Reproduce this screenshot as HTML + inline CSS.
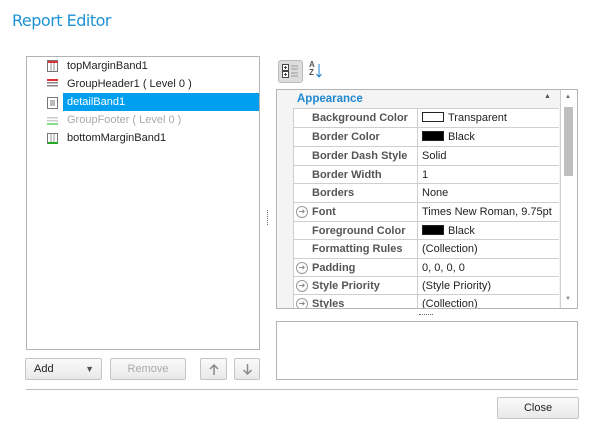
<!DOCTYPE html>
<html><head><style>
*{box-sizing:border-box;margin:0;padding:0}
body{width:603px;height:442px;background:#fff;font-family:"Liberation Sans","DejaVu Sans",sans-serif;font-size:11px;color:#222;position:relative;overflow:hidden}
.a{position:absolute;white-space:nowrap}
.title{left:12px;top:11px;font-size:16px;color:#1e92d6;font-family:"DejaVu Sans",sans-serif;letter-spacing:-0.5px}
.list{left:26px;top:56px;width:234px;height:294px;border:1px solid #b4b4b4}
.it{position:absolute;left:40px;height:18px;line-height:18px;font-size:11px;white-space:nowrap}
.sel{left:36px;width:196px;background:#009ff0;color:#fff;padding-left:4px}
.btn{border:1px solid #c4c4c4;border-radius:2px;background:linear-gradient(#fafafa,#e9e9e9);text-align:center;line-height:20px;font-size:11px}
.grid{left:276px;top:89px;width:302px;height:220px;border:1px solid #b4b4b4;background:#f4f4f4;overflow:hidden}
.row{position:absolute;left:16px;width:266px;height:19px;border-bottom:1px solid #cfcfcf;background:#fff;white-space:nowrap}
.row .n{position:absolute;left:0;top:0;bottom:0;width:125px;border-left:1px solid #cfcfcf;border-right:1px solid #cfcfcf;font-weight:bold;color:#555;padding-left:18px;line-height:18px;font-size:11px;overflow:hidden}
.row .v{position:absolute;left:129px;top:0;line-height:18px;font-size:11px;color:#222}
.sw{display:inline-block;width:22px;height:10px;border:1px solid #222;vertical-align:-1px;margin-right:4px}
.arr{position:absolute;left:2px;top:3px;width:12px;height:12px;border:1px solid #999;border-radius:50%;font-size:8px;line-height:10px;text-align:center;color:#888;font-weight:normal}
</style></head><body>
<div class="a title">Report Editor</div>

<div class="a list">
 <svg class="a" style="left:20px;top:3px" width="12" height="84" viewBox="0 0 12 84">
  <rect x="0.5" y="0.5" width="10" height="11" fill="#fff" stroke="#777"/><rect x="1" y="1" width="10" height="2" fill="#d33"/><line x1="4" y1="3" x2="4" y2="11" stroke="#999"/><line x1="7" y1="3" x2="7" y2="11" stroke="#999"/>
  <rect x="0" y="19" width="11" height="2" fill="#d33"/><rect x="0" y="22" width="11" height="1.5" fill="#888"/><rect x="0" y="25" width="11" height="1.5" fill="#888"/>
  <rect x="0.5" y="37.5" width="10" height="11" fill="#fff" stroke="#777"/><line x1="3" y1="41" x2="8" y2="41" stroke="#777"/><line x1="3" y1="43" x2="8" y2="43" stroke="#777"/><line x1="3" y1="45" x2="8" y2="45" stroke="#777"/>
  <rect x="0" y="57" width="11" height="1.5" fill="#ccc"/><rect x="0" y="60" width="11" height="1.5" fill="#ccc"/><rect x="0" y="63" width="11" height="2" fill="#8d8"/>
  <rect x="0.5" y="73.5" width="10" height="11" fill="#fff" stroke="#777"/><line x1="4" y1="74" x2="4" y2="82" stroke="#999"/><line x1="7" y1="74" x2="7" y2="82" stroke="#999"/><rect x="1" y="82" width="10" height="2" fill="#2a2"/>
 </svg>
 <div class="it" style="top:0">topMarginBand1</div>
 <div class="it" style="top:18px">GroupHeader1 ( Level 0 )</div>
 <div class="it sel" style="top:36px">detailBand1</div>
 <div class="it" style="top:54px;color:#aaa">GroupFooter ( Level 0 )</div>
 <div class="it" style="top:72px">bottomMarginBand1</div>
</div>

<div class="a btn" style="left:25px;top:358px;width:77px;height:22px;text-align:left;padding-left:8px">Add<span style="position:absolute;right:7px;top:0;font-size:9px;color:#555">▼</span></div>
<div class="a btn" style="left:110px;top:358px;width:76px;height:22px;color:#aaa">Remove</div>
<svg class="a btn" style="left:200px;top:358px" width="27" height="22"><path d="M13 16 V6 M9 10 L13 6 L17 10" fill="none" stroke="#888" stroke-width="1.5"/></svg>
<svg class="a btn" style="left:234px;top:358px" width="26" height="22"><path d="M12.5 5 V15 M8.5 11 L12.5 15 L16.5 11" fill="none" stroke="#888" stroke-width="1.5"/></svg>

<div class="a" style="left:267px;top:210px;width:1px;height:15px;border-left:1px dotted #666"></div>

<div class="a" style="left:278px;top:60px;width:25px;height:23px;border:1px solid #bbb;border-radius:3px;background:#ddd"></div>
<svg class="a" style="left:282px;top:63px" width="18" height="16"><rect x="0.5" y="1.5" width="6" height="6" fill="#fff" stroke="#444"/><rect x="0.5" y="8.5" width="6" height="6" fill="#fff" stroke="#444"/><line x1="2" y1="4.5" x2="5" y2="4.5" stroke="#444"/><line x1="3.5" y1="3" x2="3.5" y2="6" stroke="#444"/><line x1="2" y1="11.5" x2="5" y2="11.5" stroke="#444"/><line x1="3.5" y1="10" x2="3.5" y2="13" stroke="#444"/><g stroke="#999"><line x1="9" y1="3" x2="16" y2="3"/><line x1="9" y1="6" x2="16" y2="6"/><line x1="9" y1="10" x2="16" y2="10"/><line x1="9" y1="13" x2="16" y2="13"/></g></svg>
<div class="a" style="left:309px;top:61px;font-size:8px;line-height:8px;color:#555;font-weight:bold">A<br>Z</div>
<svg class="a" style="left:316px;top:63px" width="6" height="16"><line x1="3" y1="1" x2="3" y2="14" stroke="#1e80d0"/><path d="M0.5 11 L3 14 L5.5 11" fill="none" stroke="#1e80d0"/></svg>

<div class="a grid">
 <div class="a" style="left:16px;top:0;width:266px;height:19px;background:#f4f4f4;border-bottom:1px solid #cfcfcf"></div>
 <div class="a" style="left:20px;top:3px;font-weight:bold;color:#1e88d0;font-size:11.5px">Appearance</div>
 <div class="a" style="left:267px;top:3px;font-size:7px;color:#555">▲</div>
 <div class="row" style="top:19px;height:19px"><div class="n">Background Color</div><div class="v"><span class="sw" style="background:#fff"></span>Transparent</div></div>
 <div class="row" style="top:38px;height:19px"><div class="n">Border Color</div><div class="v"><span class="sw" style="background:#000"></span>Black</div></div>
 <div class="row" style="top:57px;height:19px"><div class="n">Border Dash Style</div><div class="v">Solid</div></div>
 <div class="row" style="top:76px;height:18px"><div class="n">Border Width</div><div class="v">1</div></div>
 <div class="row" style="top:94px;height:19px"><div class="n">Borders</div><div class="v">None</div></div>
 <div class="row" style="top:113px;height:19px"><div class="n"><span class="arr">➔</span>Font</div><div class="v">Times New Roman, 9.75pt</div></div>
 <div class="row" style="top:132px;height:18px"><div class="n">Foreground Color</div><div class="v"><span class="sw" style="background:#000"></span>Black</div></div>
 <div class="row" style="top:150px;height:19px"><div class="n">Formatting Rules</div><div class="v">(Collection)</div></div>
 <div class="row" style="top:169px;height:18px"><div class="n"><span class="arr">➔</span>Padding</div><div class="v">0, 0, 0, 0</div></div>
 <div class="row" style="top:187px;height:18px"><div class="n"><span class="arr">➔</span>Style Priority</div><div class="v">(Style Priority)</div></div>
 <div class="row" style="top:205px;height:19px"><div class="n"><span class="arr">➔</span>Styles</div><div class="v">(Collection)</div></div>
 <div class="a" style="left:283px;top:0;width:18px;height:220px;background:#fff;border-left:1px solid #cfcfcf"></div>
 <div class="a" style="left:288px;top:4px;font-size:6px;color:#666">▲</div>
 <div class="a" style="left:287px;top:17px;width:9px;height:69px;background:#bfbfbf"></div>
 <div class="a" style="left:288px;top:206px;font-size:6px;color:#888">▼</div>
</div>
<div class="a" style="left:419px;top:314px;width:14px;border-top:1px dotted #666"></div>
<div class="a" style="left:276px;top:321px;width:302px;height:59px;border:1px solid #b4b4b4"></div>

<div class="a" style="left:26px;top:389px;width:552px;height:1px;background:#bdbdbd"></div>
<div class="a btn" style="left:497px;top:397px;width:82px;height:22px">Close</div>
</body></html>
